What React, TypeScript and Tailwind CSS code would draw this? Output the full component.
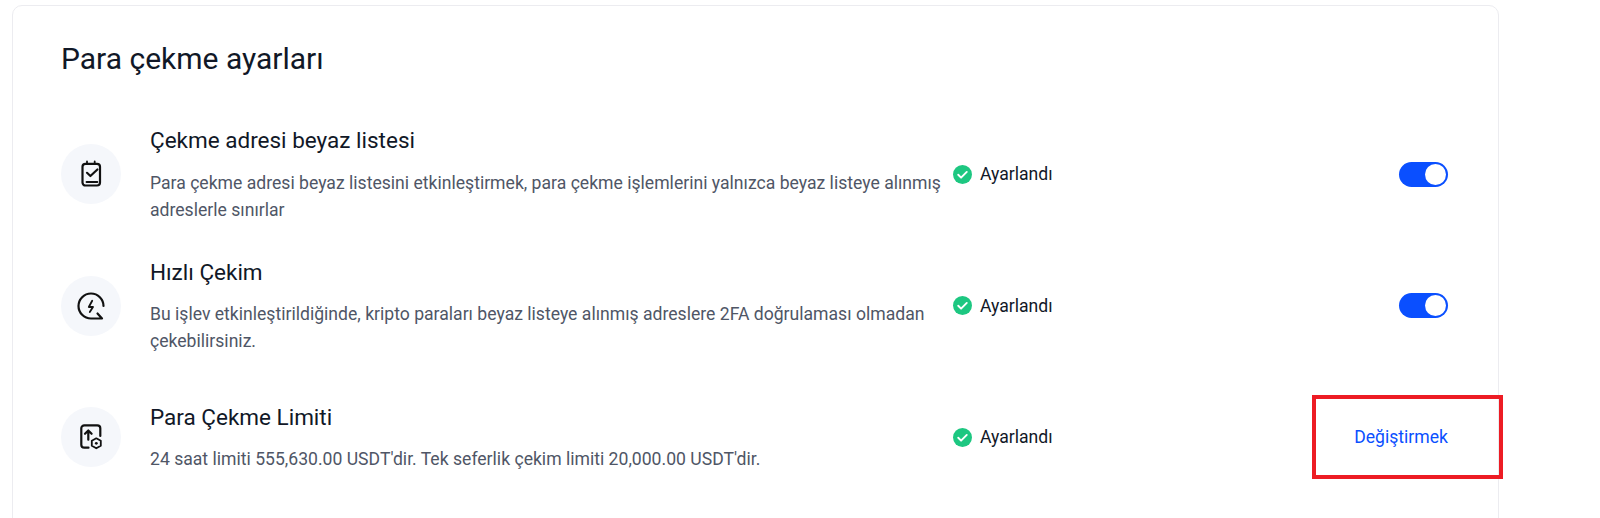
import React from "react";

const font = { fontFamily: '"Roboto", "Liberation Sans", sans-serif' };

function Toggle() {
  return (
    <div className="flex h-[25px] w-[49px] items-center justify-end rounded-full bg-[#0a4fff] pr-[2px]">
      <div className="h-[21px] w-[21px] rounded-full bg-white" />
    </div>
  );
}

function Status() {
  return (
    <div className="flex items-center gap-[8px]">
      <svg width="19" height="19" viewBox="0 0 20 20">
        <circle cx="10" cy="10" r="10" fill="#1dc781" />
        <path d="M5.5 10.3l3 3 6-6" fill="none" stroke="#fff" strokeWidth="2" strokeLinecap="round" strokeLinejoin="round" />
      </svg>
      <span className="text-[17.6px] leading-[24px] text-[#111827]">Ayarlandı</span>
    </div>
  );
}

function IconCircle({ children }: { children: React.ReactNode }) {
  return (
    <div className="flex h-[60px] w-[60px] shrink-0 items-center justify-center rounded-full bg-[#f5f7fb]">
      {children}
    </div>
  );
}

const ClipIcon = (
  <svg width="26" height="28" viewBox="0 0 26 28" fill="none" stroke="#111" strokeWidth="2.2" strokeLinecap="round" strokeLinejoin="round">
    <rect x="4.5" y="3.8" width="17.5" height="21.7" rx="3" />
    <path d="M9 1.5v2M16.7 1.5v2" strokeWidth="1.8" />
    <path d="M9 12.8l3.4 3.2 7-6.5" />
    <path d="M8.5 22h10.9" strokeWidth="1.8" />
  </svg>
);

const BoltIcon = (
  <svg width="30" height="30" viewBox="0 0 30 30" fill="none" stroke="#111" strokeWidth="2.2" strokeLinecap="round" strokeLinejoin="round">
    <path d="M27.5 15A12.5 12.5 0 1 0 15 27.5h11l-4.5-5" />
    <path d="M16.2 9.8L12.8 16H17L13.8 21" strokeWidth="1.8" />
  </svg>
);

const LimitIcon = (
  <svg width="28" height="28" viewBox="0 0 28 28" fill="none" stroke="#111" strokeWidth="2.2" strokeLinecap="round" strokeLinejoin="round">
    <path d="M11.5 24.7H7.3a3 3 0 0 1-3-3V5.3a3 3 0 0 1 3-3h13a3 3 0 0 1 3 3V13" />
    <path d="M11.3 16.7V7.5M8 10.8L11.3 7.5l3.3 3.3" />
    <path d="M19.3 15.3l4.5 2.5v5l-4.5 2.5-4.5-2.5v-5z" strokeWidth="1.8" />
    <circle cx="19.3" cy="20.3" r="1.4" fill="#111" stroke="none" />
  </svg>
);

function Row({
  icon,
  title,
  desc,
  action,
}: {
  icon: React.ReactNode;
  title: string;
  desc: React.ReactNode;
  action: React.ReactNode;
}) {
  return (
    <div className="flex h-[131.5px] items-center">
      <IconCircle>{icon}</IconCircle>
      <div className="ml-[29px] w-[792px] shrink-0">
        <div className="text-[22.5px] leading-[30px] text-[#111827]">{title}</div>
        <div className="mt-[14.5px] text-[17.6px] leading-[27px] text-[#4f5666]">{desc}</div>
      </div>
      <div className="ml-[11px] flex-1">
        <Status />
      </div>
      <div className="flex w-[200px] justify-end">{action}</div>
    </div>
  );
}

export default function App() {
  return (
    <div className="relative h-[518px] w-[1600px] overflow-hidden bg-white" style={font}>
      <div className="ml-[12px] mt-[5px] h-[560px] w-[1487px] rounded-[10px] border border-[#ececf0] pl-[48px] pr-[50px] pt-[32px]">
        <h1 className="text-[30px] font-normal leading-[42px] text-[#111827]">Para çekme ayarları</h1>
        <div className="mt-[28.5px]">
          <Row
            icon={ClipIcon}
            title="Çekme adresi beyaz listesi"
            desc={<>Para çekme adresi beyaz listesini etkinleştirmek, para çekme işlemlerini yalnızca beyaz listeye alınmış adreslerle sınırlar</>}
            action={<Toggle />}
          />
          <Row
            icon={BoltIcon}
            title="Hızlı Çekim"
            desc={<>Bu işlev etkinleştirildiğinde, kripto paraları beyaz listeye alınmış adreslere 2FA doğrulaması olmadan çekebilirsiniz.</>}
            action={<Toggle />}
          />
          <Row
            icon={LimitIcon}
            title="Para Çekme Limiti"
            desc={<>24 saat limiti 555,630.00 USDT'dir. Tek seferlik çekim limiti 20,000.00 USDT'dir.</>}
            action={<span className="text-[17.6px] leading-[24px] text-[#0a4fff]">Değiştirmek</span>}
          />
        </div>
      </div>
      <div className="absolute left-[1312px] top-[395px] h-[84px] w-[191px] border-[4px] border-[#ed1c24]" />
    </div>
  );
}
